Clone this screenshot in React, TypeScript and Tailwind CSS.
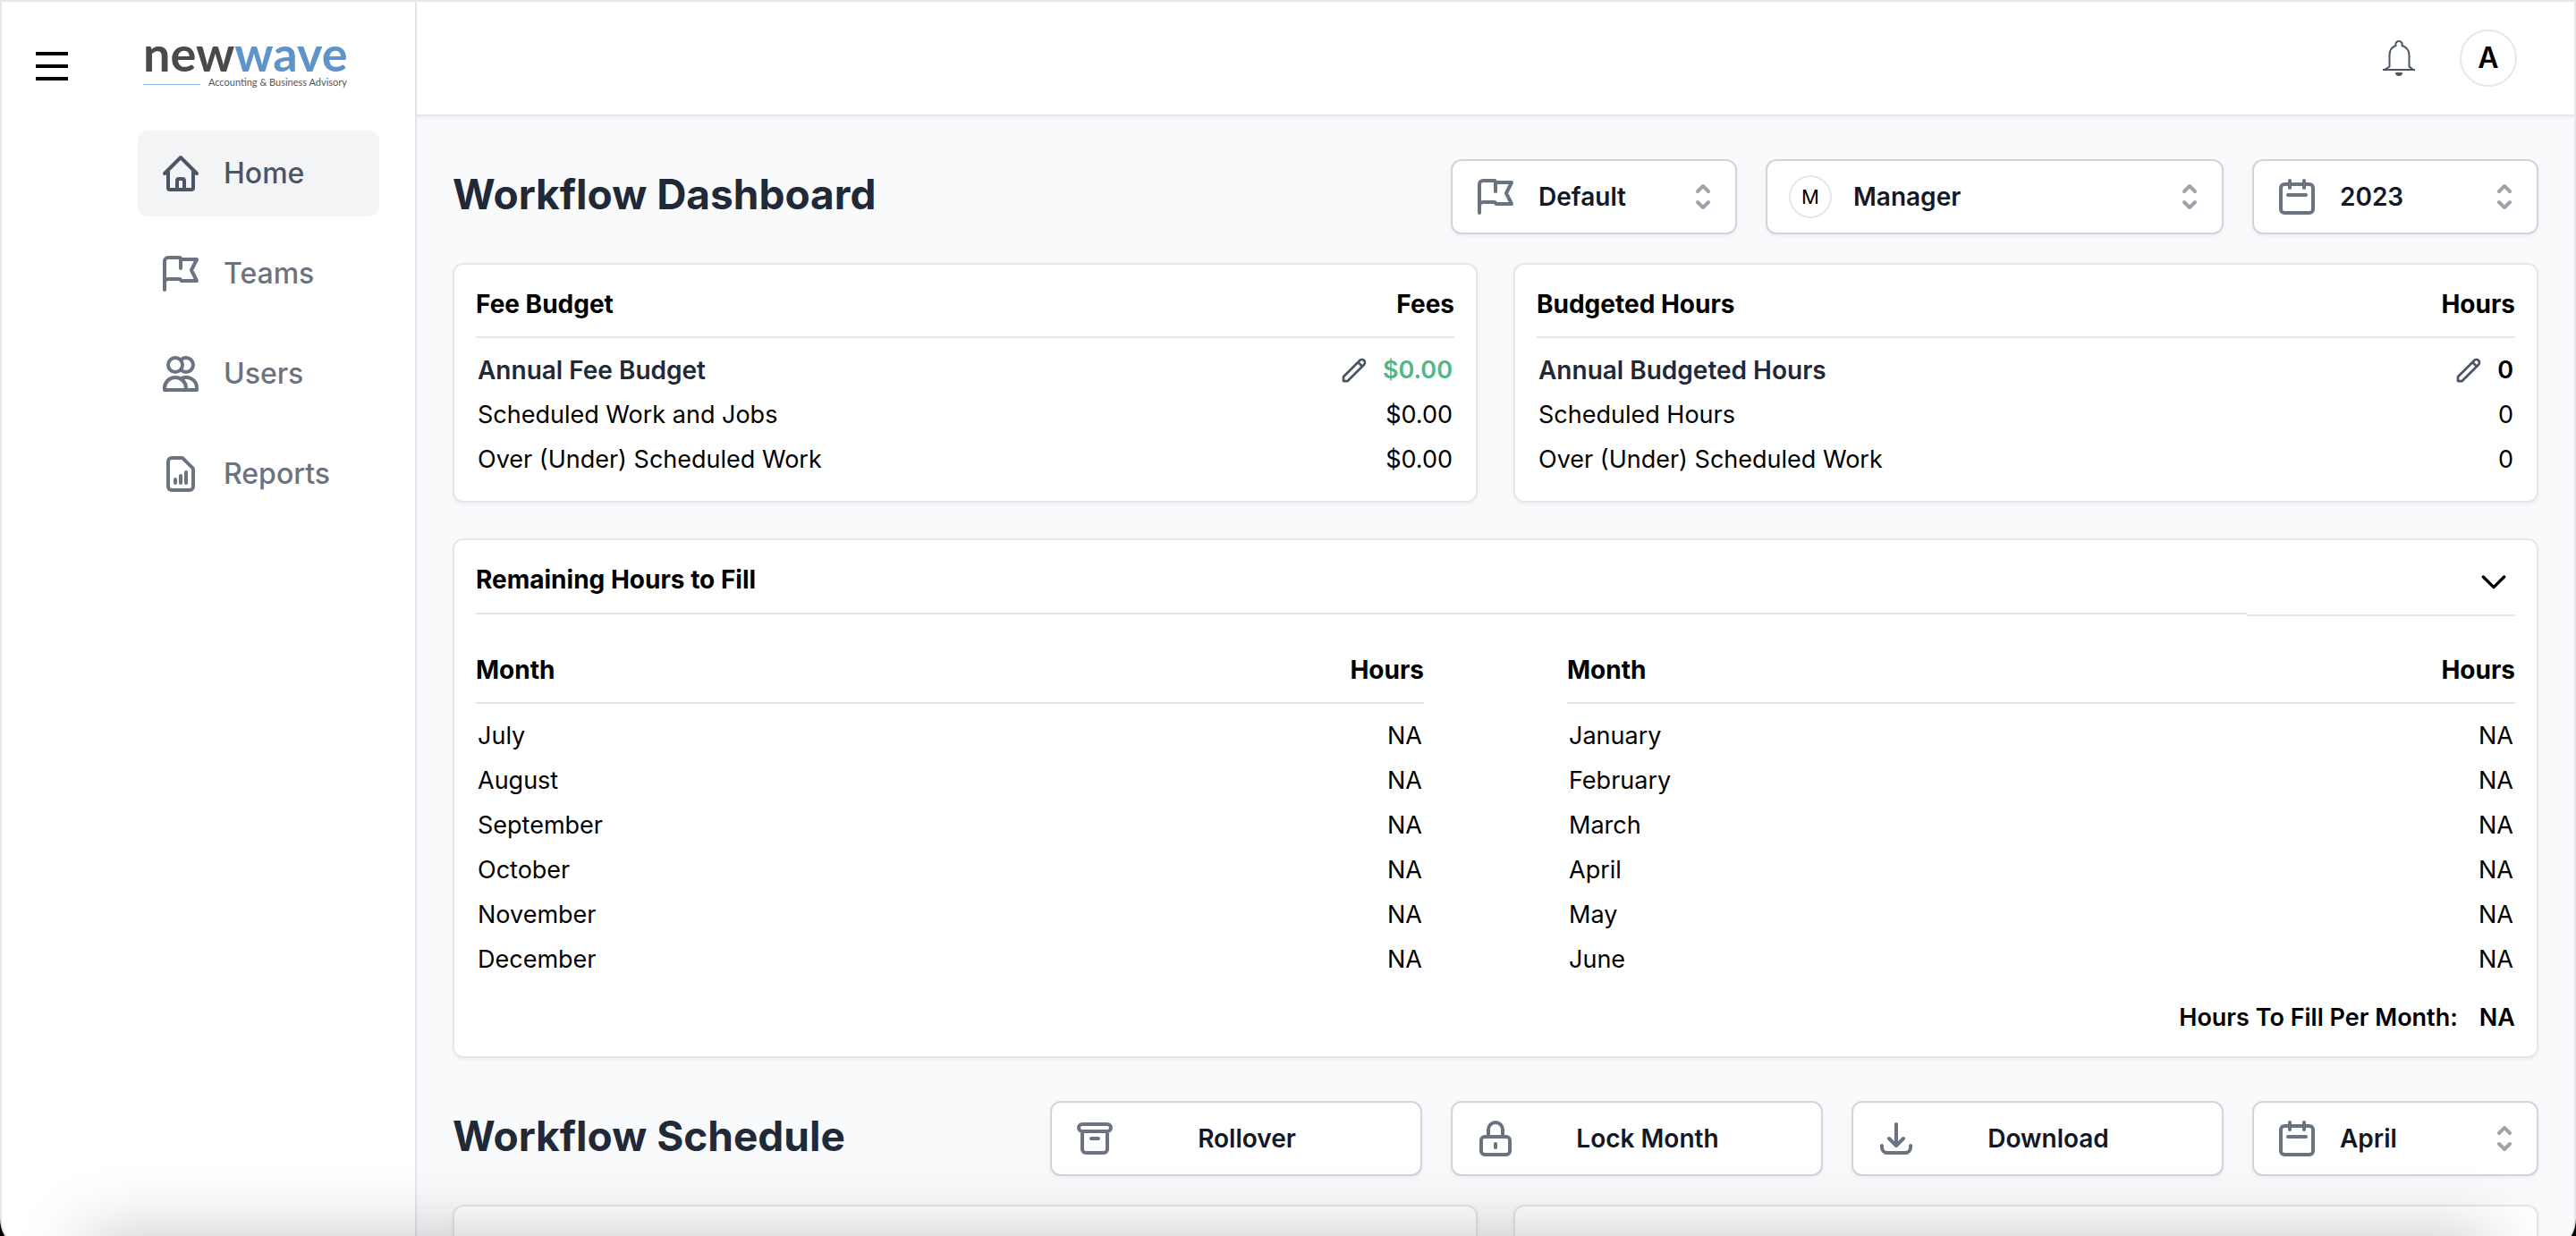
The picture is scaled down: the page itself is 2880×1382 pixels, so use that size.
import type { ReactNode } from "react";
import type { IconType } from "react-icons";
import {
  HiOutlineArchive,
  HiOutlineCalendar,
  HiOutlineChevronDown,
  HiOutlineDocumentReport,
  HiOutlineDownload,
  HiOutlineFlag,
  HiOutlineHome,
  HiOutlineLockClosed,
  HiOutlinePencil,
  HiOutlineUsers,
  HiSelector,
} from "react-icons/hi";

const navItems: { label: string; icon: IconType; active?: boolean }[] = [
  { label: "Home", icon: HiOutlineHome, active: true },
  { label: "Teams", icon: HiOutlineFlag },
  { label: "Users", icon: HiOutlineUsers },
  { label: "Reports", icon: HiOutlineDocumentReport },
];

const firstHalf = ["July", "August", "September", "October", "November", "December"];
const secondHalf = ["January", "February", "March", "April", "May", "June"];

function MenuIcon() {
  return (
    <svg viewBox="0 0 36 32" className="h-8 w-9" fill="currentColor" aria-hidden="true">
      <path d="M0 0h36v4H0zM0 14h36v4H0zM0 28h36v4H0z" />
    </svg>
  );
}

function BellIcon() {
  return (
    <svg viewBox="0 0 36 40" className="h-10 w-9" fill="none" stroke="currentColor" strokeWidth="2" aria-hidden="true">
      <path d="M2 33h32l-4.500-3.500V17c0-6-3.500-9.500-8-11 .6-3-1-5-3.500-5s-4.100 2-3.500 5c-4.500 1.500-7 5-7 11v12.500L2 33z" />
      <path d="M0 32h36v2H0z" fill="currentColor" stroke="none" />
      <path d="M14 36h8a4 4 0 0 1-8 0z" fill="currentColor" stroke="none" />
    </svg>
  );
}

function Logo() {
  return (
    <a href="#home" aria-label="newwave" className="flex w-[228px] flex-col font-[Lato,sans-serif]">
      <span className="flex h-9 items-center text-[54px] leading-9 font-bold">
        <span className="text-[#4a4a4a]">new</span>
        <span className="text-[#6093c7]">wave</span>
      </span>
      <span className="mt-2 flex items-end justify-between">
        <span className="mb-[3px] h-px w-16 bg-[#8fb5e3]" />
        <span className="text-[11px] leading-3 whitespace-nowrap text-[#555555]">Accounting &amp; Business Advisory</span>
      </span>
    </a>
  );
}

function Sidebar() {
  return (
    <aside className="flex w-[464px] shrink-0 items-start justify-between border-r-2 border-gray-200 bg-white pr-10 pl-[38px]">
      <button type="button" aria-label="Toggle menu" className="mt-14 text-black">
        <MenuIcon />
      </button>
      <div className="w-[270px] pt-10">
        <div className="h-[104px] pl-1.5">
          <Logo />
        </div>
        <nav className="flex flex-col gap-4">
          {navItems.map(({ label, icon: Icon, active }) => (
            <a
              key={label}
              href={`#${label.toLowerCase()}`}
              aria-current={active ? "page" : undefined}
              className={
                active
                  ? "flex h-24 items-center gap-6 rounded-xl bg-gray-100 px-6 text-[32px] font-medium text-[#4b5563]"
                  : "flex h-24 items-center gap-6 rounded-xl px-6 text-[32px] font-medium text-[#6b7280]"
              }
            >
              <Icon className="size-12" />
              {label}
            </a>
          ))}
        </nav>
      </div>
    </aside>
  );
}

function Header() {
  return (
    <header className="flex h-32 shrink-0 items-center justify-end border-b-2 border-gray-200 bg-white pr-16 shadow-[0_2px_4px_rgba(0,0,0,0.05)]">
      <button type="button" aria-label="Notifications" className="mr-[50px] text-[#4b5563]">
        <BellIcon />
      </button>
      <button
        type="button"
        aria-label="Account"
        className="flex size-16 items-center justify-center rounded-full border-2 border-gray-200 text-[32px] font-semibold text-black"
      >
        A
      </button>
    </header>
  );
}

function SelectBox({ label, value, icon, wide }: { label: string; value: string; icon: ReactNode; wide?: boolean }) {
  return (
    <div className={wide ? "relative w-[512px]" : "relative w-80"}>
      <select
        aria-label={label}
        defaultValue={value}
        className="h-[84px] w-full appearance-none rounded-xl border-2 border-[#d1d5db] bg-white pr-16 pl-24 text-[28px] font-semibold text-[#111827] shadow-[0_2px_4px_rgba(0,0,0,0.05)]"
      >
        <option>{value}</option>
      </select>
      <span className="pointer-events-none absolute inset-y-0 left-[26px] flex items-center text-[#6b7280]">{icon}</span>
      <HiSelector className="pointer-events-none absolute inset-y-0 right-[18px] my-auto size-10 text-[#9ca3af]" />
    </div>
  );
}

function ActionButton({ label, icon: Icon }: { label: string; icon: IconType }) {
  return (
    <button
      type="button"
      className="flex h-[84px] w-[416px] items-center rounded-xl border-2 border-[#d1d5db] bg-white pl-6 text-[28px] font-semibold text-[#111827] shadow-[0_2px_4px_rgba(0,0,0,0.05)]"
    >
      <Icon className="size-12 text-[#6b7280]" />
      <span className="mr-12 flex-1 text-center">{label}</span>
    </button>
  );
}

function Section({ title, controls }: { title: string; controls: ReactNode }) {
  return (
    <div className="mb-8 flex items-center justify-between">
      <h1 className="pb-1.5 text-[46px] leading-12 font-bold text-[#1f2937]">{title}</h1>
      <div className="flex gap-8">{controls}</div>
    </div>
  );
}

function Card({ children }: { children?: ReactNode }) {
  return (
    <section className="min-h-[268px] rounded-xl border-2 border-gray-200 bg-white px-6 pt-6 pb-5 shadow-[0_2px_4px_rgba(0,0,0,0.05)]">
      {children}
    </section>
  );
}

type Row = { label: string; value: string; editable?: boolean; valueClass?: string };

function DataTable({ head, rows }: { head: [string, string]; rows: Row[] }) {
  return (
    <table className="w-full border-collapse text-[27px] leading-10 text-black">
      <thead>
        <tr className="border-b-2 border-gray-200 text-[28px] leading-10 font-bold">
          <th scope="col" className="pb-4 text-left">
            {head[0]}
          </th>
          <th scope="col" className="pb-4 text-right">
            {head[1]}
          </th>
        </tr>
      </thead>
      <tbody className="before:block before:h-[11px]">
        {rows.map((row) => (
          <tr key={row.label} className="h-[50px]">
            <td className={row.editable ? "pl-0.5 text-[28px] leading-10 font-semibold text-[#1f2937]" : "pl-0.5"}>
              {row.label}
            </td>
            <td className="pr-0.5">
              <div className="flex items-center justify-end gap-4">
                {row.editable && (
                  <button type="button" aria-label={`Edit ${row.label}`} className="text-[#4b5563]">
                    <HiOutlinePencil className="size-8" />
                  </button>
                )}
                <span className={row.valueClass}>{row.value}</span>
              </div>
            </td>
          </tr>
        ))}
      </tbody>
    </table>
  );
}

const toRows = (months: string[]): Row[] => months.map((label) => ({ label, value: "NA" }));

function RemainingHours() {
  return (
    <Card>
      <div className="flex items-start text-[28px] leading-10">
        <h2 className="h-[59px] flex-1 border-b-2 border-gray-200 font-bold text-black">Remaining Hours to Fill</h2>
        <div className="flex h-[61px] w-[300px] items-start justify-end border-b-2 border-gray-200 pt-0.5 pr-1">
          <button type="button" aria-label="Collapse remaining hours" className="text-black">
            <HiOutlineChevronDown className="size-10" />
          </button>
        </div>
      </div>
      <div className="mt-10 grid grid-cols-2 gap-40">
        <DataTable head={["Month", "Hours"]} rows={toRows(firstHalf)} />
        <DataTable head={["Month", "Hours"]} rows={toRows(secondHalf)} />
      </div>
      <p className="mt-5 mb-[3px] flex justify-end gap-6 text-[27px] leading-10 font-semibold text-black">
        <span>Hours To Fill Per Month:</span>
        <span>NA</span>
      </p>
    </Card>
  );
}

export default function App() {
  return (
    <div className="relative h-screen overflow-hidden bg-black font-[Inter,sans-serif] antialiased">
      <div className="flex h-[calc(100%+20px)] overflow-hidden rounded-b-[40px] border-2 border-gray-200 bg-[#f9fafb]">
        <Sidebar />
        <div className="flex min-w-0 flex-1 flex-col">
          <Header />
          <main className="flex-1 overflow-y-auto px-10 pt-12 [scrollbar-width:none]">
            <Section
              title="Workflow Dashboard"
              controls={
                <>
                  <SelectBox label="Team" value="Default" icon={<HiOutlineFlag className="size-12" />} />
                  <SelectBox
                    label="Manager"
                    value="Manager"
                    wide
                    icon={
                      <span className="flex size-12 items-center justify-center rounded-full border-2 border-gray-200 text-[22px] text-black">
                        M
                      </span>
                    }
                  />
                  <SelectBox label="Year" value="2023" icon={<HiOutlineCalendar className="size-12" />} />
                </>
              }
            />
            <div className="mb-10 grid grid-cols-2 gap-10">
              <Card>
                <DataTable
                  head={["Fee Budget", "Fees"]}
                  rows={[
                    { label: "Annual Fee Budget", value: "$0.00", editable: true, valueClass: "font-semibold text-[#52b788]" },
                    { label: "Scheduled Work and Jobs", value: "$0.00" },
                    { label: "Over (Under) Scheduled Work", value: "$0.00" },
                  ]}
                />
              </Card>
              <Card>
                <DataTable
                  head={["Budgeted Hours", "Hours"]}
                  rows={[
                    { label: "Annual Budgeted Hours", value: "0", editable: true, valueClass: "font-semibold" },
                    { label: "Scheduled Hours", value: "0" },
                    { label: "Over (Under) Scheduled Work", value: "0" },
                  ]}
                />
              </Card>
            </div>
            <RemainingHours />
            <div className="mt-12">
              <Section
                title="Workflow Schedule"
                controls={
                  <>
                    <ActionButton label="Rollover" icon={HiOutlineArchive} />
                    <ActionButton label="Lock Month" icon={HiOutlineLockClosed} />
                    <ActionButton label="Download" icon={HiOutlineDownload} />
                    <SelectBox label="Month" value="April" icon={<HiOutlineCalendar className="size-12" />} />
                  </>
                }
              />
            </div>
            <div className="grid grid-cols-2 gap-10">
              <Card />
              <Card />
            </div>
          </main>
        </div>
      </div>
      {/* soft shade along the bottom edge of the window */}
      <div className="pointer-events-none absolute inset-x-24 top-full h-40 shadow-[0_0_80px_rgba(0,0,0,0.23)]" />
    </div>
  );
}
